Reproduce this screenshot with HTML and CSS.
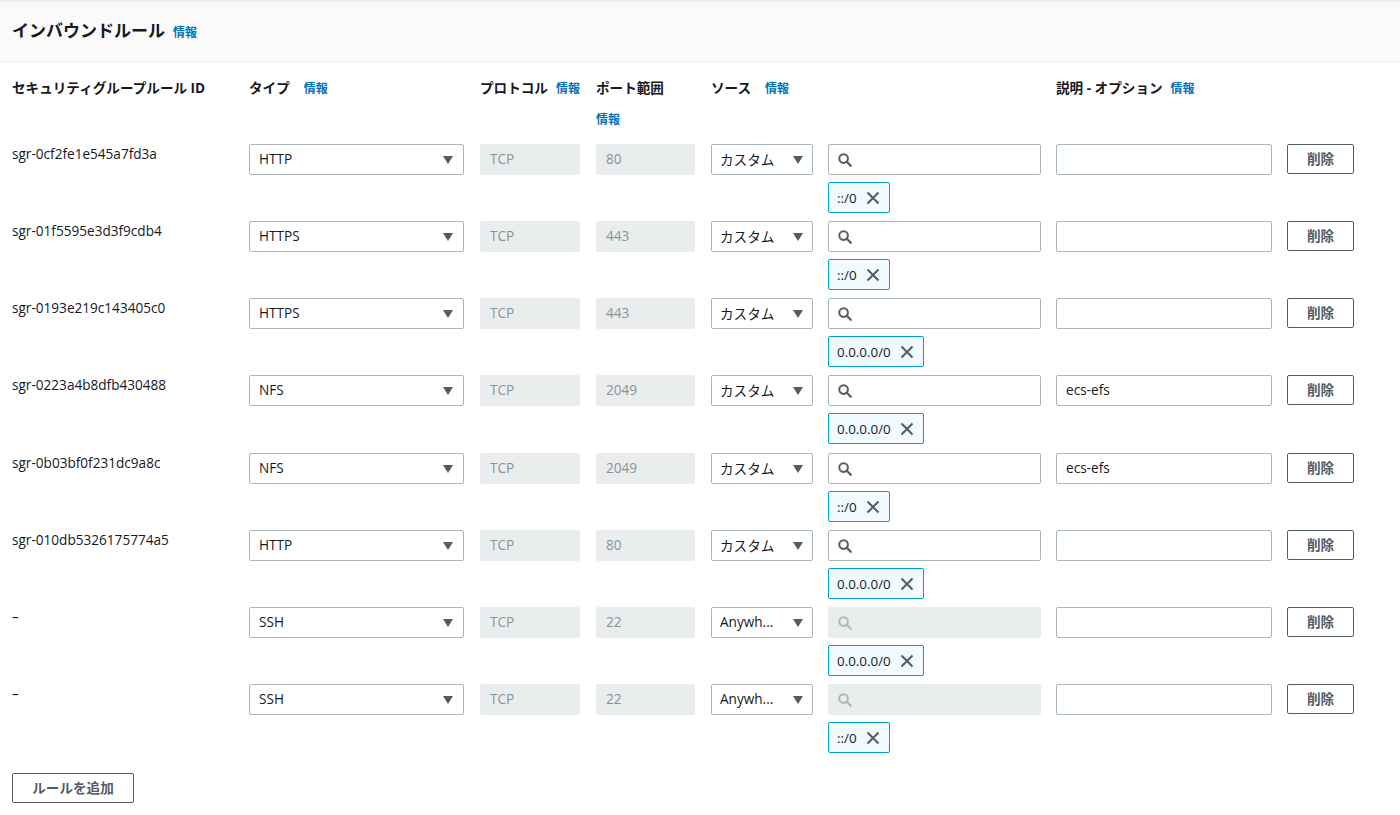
FILE: index.html
```html
<!DOCTYPE html>
<html lang="ja">
<head>
<meta charset="utf-8">
<title>インバウンドルール</title>
<link rel="stylesheet" href="styles.css">
</head>
<body>
<div class="panel">
  <div class="panel-head">
    <h2 class="title">インバウンドルール</h2><a class="info info-title">情報</a>
  </div>
  <div class="panel-body">
    <div class="grid head-row">
      <div class="hcell">セキュリティグループルール ID</div>
      <div class="hcell">タイプ<a class="info gap-l">情報</a></div>
      <div class="hcell">プロトコル<a class="info gap-s">情報</a></div>
      <div class="hcell port-head">ポート範囲<a class="info">情報</a></div>
      <div class="hcell">ソース<a class="info gap-l">情報</a></div>
      <div class="hcell"></div>
      <div class="hcell">説明 - オプション<a class="info gap-s">情報</a></div>
      <div class="hcell"></div>
    </div>

    <div id="rows"></div>

    <button class="btn add">ルールを追加</button>
  </div>
</div>

<template id="row-tpl">
  <div class="grid rule-row">
    <div class="id"></div>
    <div class="select type-sel"><span class="val"></span><span class="caret"></span></div>
    <div class="field disabled proto">TCP</div>
    <div class="field disabled port"></div>
    <div class="select src-sel"><span class="val"></span><span class="caret"></span></div>
    <div class="src-col">
      <div class="field search">
        <svg class="mag" width="14" height="14" viewBox="0 0 14 14"><circle cx="5.6" cy="5.6" r="4.3" fill="none" stroke="currentColor" stroke-width="2"/><path d="M8.8 8.8 L12.8 12.8" stroke="currentColor" stroke-width="2.2" stroke-linecap="round"/></svg>
      </div>
      <div class="token"><span class="tval"></span>
        <svg class="x" width="14" height="14" viewBox="0 0 14 14"><path d="M1.5 1.5 L12.5 12.5 M12.5 1.5 L1.5 12.5" stroke="currentColor" stroke-width="2" fill="none"/></svg>
      </div>
    </div>
    <div class="field desc"></div>
    <button class="btn del">削除</button>
  </div>
</template>

<script src="app.js"></script>
</body>
</html>
```

FILE: app.js
```js
var rules = [
  ["sgr-0cf2fe1e545a7fd3a", "HTTP", "80", "カスタム", "::/0", ""],
  ["sgr-01f5595e3d3f9cdb4", "HTTPS", "443", "カスタム", "::/0", ""],
  ["sgr-0193e219c143405c0", "HTTPS", "443", "カスタム", "0.0.0.0/0", ""],
  ["sgr-0223a4b8dfb430488", "NFS", "2049", "カスタム", "0.0.0.0/0", "ecs-efs"],
  ["sgr-0b03bf0f231dc9a8c", "NFS", "2049", "カスタム", "::/0", "ecs-efs"],
  ["sgr-010db5326175774a5", "HTTP", "80", "カスタム", "0.0.0.0/0", ""],
  ["–", "SSH", "22", "Anywh...", "0.0.0.0/0", ""],
  ["–", "SSH", "22", "Anywh...", "::/0", ""]
];
var tpl = document.getElementById("row-tpl");
var host = document.getElementById("rows");
rules.forEach(function (r) {
  var n = tpl.content.cloneNode(true);
  n.querySelector(".id").textContent = r[0];
  n.querySelector(".type-sel .val").textContent = r[1];
  n.querySelector(".port").textContent = r[2];
  n.querySelector(".src-sel .val").textContent = r[3];
  n.querySelector(".tval").textContent = r[4];
  n.querySelector(".desc").textContent = r[5];
  if (r[3] !== "カスタム") n.querySelector(".search").classList.add("disabled");
  host.appendChild(n);
});
```

FILE: styles.css
```css
* { box-sizing: border-box; }
body {
  margin: 0;
  background: #fff;
  color: #16191f;
  font-family: "Open Sans", "Noto Sans CJK JP", sans-serif;
  font-size: 13.6px;
}
.panel { border-top: 2px solid #eaeded; }
.panel-head {
  height: 60px;
  background: #fafafa;
  border-bottom: 1px solid #eaeded;
  display: flex;
  align-items: center;
  padding: 0 12px 2px;
}
.title {
  margin: 0;
  font-size: 17px;
  font-weight: 700;
  line-height: 22px;
}
.info {
  color: #0073bb;
  font-size: 12px;
  font-weight: 700;
  text-decoration: none;
}
.info-title { margin-left: 8px; margin-top: 2px; }
.panel-body { padding: 16px 12px 0; }
.grid {
  display: grid;
  grid-template-columns: 237px 231px 116px 115px 117px 228px 231px 67px;
  align-items: start;
}
.head-row { height: 66px; }
.hcell {
  font-weight: 700;
  font-size: 13.6px;
  line-height: 20px;
}
.gap-l { margin-left: 14px; }
.gap-s { margin-left: 8px; }
.port-head { display: flex; flex-direction: column; gap: 16px; }
.port-head .info { line-height: 12px; }
.rule-row { height: 77px; }
.rule-row:nth-child(4) { height: 78px; }
.id { padding-top: 0; line-height: 20px; }
.select, .field {
  height: 31px;
  border: 1px solid #aab7b8;
  border-radius: 2px;
  background: #fff;
  display: flex;
  align-items: center;
  padding: 0 9px 2px;
  font-size: 13.6px;
}
.type-sel { width: 215px; }
.src-sel { width: 102px; padding: 0 8px 2px 8px; }
.src-sel .caret { margin-top: 2px; }
.type-sel .caret { margin-top: 2px; }
.val { flex: 1; }
.caret {
  width: 0; height: 0;
  border-left: 5.5px solid transparent;
  border-right: 5.5px solid transparent;
  border-top: 8px solid #545b64;
  margin-right: 1px;
}
.field.disabled {
  background: #eaeded;
  border-color: #eaeded;
  color: #879596;
}
.proto { width: 100px; }
.port { width: 99px; }
.src-col { display: flex; flex-direction: column; gap: 7px; }
.search { width: 213px; color: #545b64; padding: 0 9px; }
.search.disabled { color: #aab7b8; }
.token {
  align-self: flex-start;
  height: 31px;
  display: flex;
  align-items: center;
  gap: 9px;
  padding: 0 9px 0 8px;
  background: #f1faff;
  border: 1px solid #00a1c9;
  border-radius: 2px;
  font-size: 13.4px;
}
.token .x { color: #545b64; }
.desc { width: 216px; }
.btn {
  font-family: inherit;
  font-size: 13.6px;
  font-weight: 700;
  color: #545b64;
  background: #fff;
  border: 1px solid #545b64;
  border-radius: 2px;
  height: 30px;
  padding: 0 0 2px;
  cursor: pointer;
}
.del { width: 67px; }
.add { width: 122px; margin-top: 12px; }
```
